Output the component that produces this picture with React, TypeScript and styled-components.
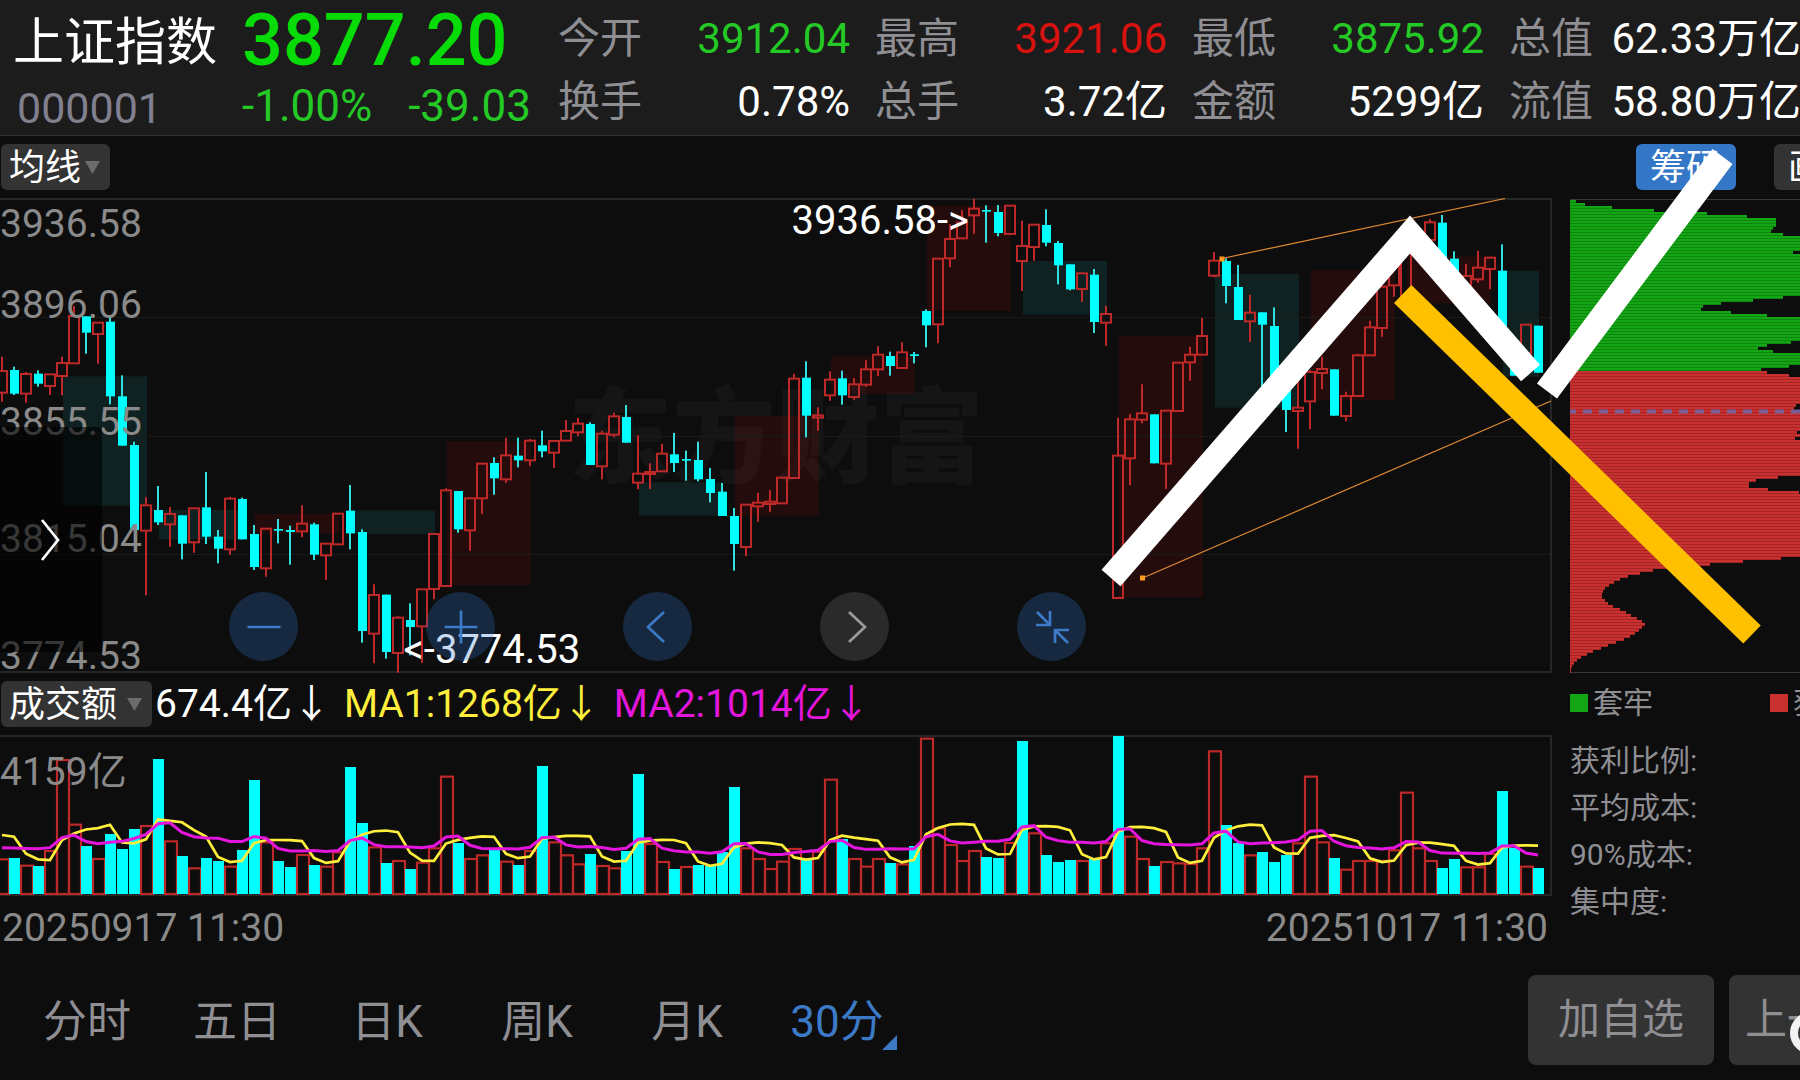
import React from "react";
import styled, { createGlobalStyle } from "styled-components";

/* ---------- market data ---------- */

type Side = "R" | "C";
type Candle = [Side, number, number, number, number];

// side, body top, body bottom, wick top, wick bottom (in thirds of a pixel below the price origin)
const candles: Candle[] = [
  ["R", 543, 608, 500, 635], ["C", 540, 611, 530, 615], ["R", 552, 611, 546, 638], ["C", 551, 581, 541, 590],
  ["R", 553, 588, 553, 615], ["R", 519, 558, 500, 616], ["R", 378, 520, 348, 520], ["C", 379, 428, 379, 491],
  ["R", 398, 432, 398, 521], ["C", 395, 619, 384, 643], ["C", 619, 767, 556, 767], ["C", 765, 1020, 755, 1020],
  ["R", 946, 1022, 922, 1216], ["C", 960, 997, 888, 1005], ["R", 972, 1003, 951, 1070], ["C", 976, 1061, 976, 1108],
  ["R", 955, 1057, 955, 1088], ["C", 952, 1040, 846, 1062], ["C", 1040, 1076, 1020, 1120], ["R", 926, 1078, 920, 1094],
  ["C", 927, 1048, 923, 1048], ["C", 1032, 1131, 1005, 1140], ["R", 1016, 1135, 1016, 1160], ["C", 1017, 1022, 987, 1060],
  ["C", 1020, 1026, 1007, 1124], ["R", 1001, 1024, 946, 1042], ["C", 1003, 1094, 998, 1110], ["R", 1061, 1096, 1061, 1170],
  ["R", 971, 1063, 971, 1063], ["C", 962, 1030, 885, 1078], ["C", 1026, 1323, 1018, 1358], ["R", 1215, 1331, 1183, 1420],
  ["C", 1214, 1386, 1214, 1406], ["R", 1283, 1389, 1279, 1448], ["C", 1290, 1311, 1240, 1396], ["R", 1198, 1309, 1198, 1418],
  ["R", 1032, 1197, 1032, 1228], ["R", 901, 1188, 895, 1188], ["C", 903, 1018, 903, 1028], ["R", 925, 1021, 925, 1082],
  ["R", 821, 925, 821, 972], ["C", 819, 865, 802, 914], ["R", 796, 868, 743, 878], ["C", 797, 811, 743, 832],
  ["R", 752, 811, 747, 828], ["C", 766, 784, 722, 802], ["R", 753, 788, 753, 834], ["R", 723, 752, 690, 752],
  ["R", 701, 727, 684, 738], ["C", 702, 825, 697, 825], ["R", 731, 829, 722, 868], ["R", 679, 734, 668, 742],
  ["C", 681, 758, 645, 758], ["R", 851, 878, 736, 898], ["R", 846, 852, 820, 897], ["R", 791, 844, 761, 844],
  ["C", 793, 819, 729, 846], ["C", 807, 812, 782, 872], ["C", 810, 868, 755, 874], ["C", 867, 909, 834, 937],
  ["C", 905, 978, 879, 978], ["C", 978, 1062, 954, 1142], ["R", 944, 1071, 944, 1099], ["R", 938, 949, 908, 995],
  ["R", 935, 942, 900, 965], ["R", 863, 940, 863, 940], ["R", 566, 864, 551, 864], ["C", 563, 677, 514, 742],
  ["R", 676, 683, 652, 722], ["R", 569, 616, 544, 632], ["C", 565, 616, 542, 644], ["R", 583, 621, 565, 629],
  ["R", 538, 584, 511, 590], ["R", 494, 538, 469, 558], ["C", 498, 528, 485, 557], ["R", 487, 534, 457, 534],
  ["C", 493, 498, 486, 520], ["C", 363, 406, 358, 472], ["R", 206, 403, 206, 460], ["R", 147, 205, 103, 232],
  ["R", 98, 145, 60, 145], ["R", 56, 76, 26, 131], ["C", 60, 64, 46, 158], ["C", 66, 129, 45, 139],
  ["R", 47, 132, 47, 132], ["R", 168, 213, 92, 303], ["R", 104, 171, 104, 212], ["C", 105, 158, 58, 169],
  ["C", 159, 226, 153, 283], ["C", 223, 298, 223, 301], ["R", 250, 297, 250, 336], ["C", 254, 396, 237, 429],
  ["R", 372, 398, 347, 467], ["R", 797, 1224, 683, 1224], ["R", 688, 805, 672, 886], ["R", 670, 689, 583, 700],
  ["C", 673, 820, 673, 820], ["R", 662, 821, 662, 897], ["R", 518, 663, 518, 663], ["R", 494, 517, 470, 572],
  ["R", 438, 494, 384, 496], ["R", 212, 257, 186, 262], ["C", 213, 288, 205, 340], ["C", 291, 390, 225, 390],
  ["R", 368, 394, 314, 456], ["C", 367, 404, 367, 590], ["C", 408, 560, 352, 560], ["C", 590, 660, 560, 726],
  ["R", 653, 663, 560, 776], ["R", 546, 634, 540, 718], ["R", 537, 549, 500, 598], ["C", 538, 677, 538, 677],
  ["R", 618, 678, 605, 694], ["R", 496, 618, 491, 618], ["R", 412, 496, 392, 496], ["R", 290, 414, 290, 440],
  ["R", 220, 286, 200, 320], ["R", 190, 330, 190, 330], ["R", 150, 190, 150, 190], ["R", 97, 150, 88, 160],
  ["C", 98, 230, 75, 230], ["C", 206, 260, 184, 270], ["R", 258, 285, 222, 290], ["R", 233, 268, 182, 278],
  ["R", 203, 237, 200, 298], ["C", 242, 440, 163, 440], ["C", 500, 557, 500, 557], ["R", 404, 490, 404, 490],
  ["C", 407, 548, 407, 548],
];

// side, left edge, top, bottom, width
const zones: [Side, number, number, number, number][] = [
  ["C", 63, 559, 947, 84], ["C", 159, 960, 1048, 84], ["R", 255, 972, 1030, 84], ["C", 351, 961, 1032, 84],
  ["R", 447, 753, 1185, 84], ["C", 639, 877, 977, 84], ["R", 735, 678, 977, 84], ["R", 831, 499, 611, 84],
  ["R", 927, 48, 362, 84], ["C", 1023, 213, 374, 84], ["R", 1119, 438, 1222, 84], ["C", 1215, 252, 653, 84],
  ["R", 1311, 241, 631, 84], ["R", 1407, 200, 340, 84], ["C", 1503, 242, 560, 36],
];

// turnover per bar, sign gives the colour: positive rises, negative falls
const turnover = [
  104, -108, 85, -84, 129, 402, 208, -144, 105, -180, -135, -195, 204, -405, 158, -114, 77, -108, -99, 82,
  -132, -342, 155, -99, -81, 117, -87, 82, 125, -381, -213, 140, -93, 99, -75, 94, 137, 352, -153, 105,
  116, -132, 97, -87, 129, -384, 155, 116, 89, -120, 84, 77, -129, -360, 150, 96, -75, 81, -87, -84,
  -126, -321, 137, 105, 75, 97, 135, -105, 127, 343, -165, 105, 82, 105, -93, 89, -144, 466, 197, 147,
  99, 129, -111, -108, 153, -459, 182, -117, -96, -102, 99, -105, 152, -474, 172, 105, -84, 96, 92, 90,
  137, 428, -207, -153, 116, -126, -96, -117, 152, 352, 155, -108, 73, 99, 99, 99, 131, 304, 137, 99,
  -78, -105, 80, 80, 120, -309, -138, 82, -78,
];
const earlier = [115, 100, 95, 95, 100, 133, 340, 169, 139];

const FULL = 249;
const chipRows: number[] = (() => {
  const rows = new Array(158).fill(FULL);
  const put = (start: number, widths: number[]) => widths.forEach((w, i) => (rows[start + i] = w));
  put(0, [6, 15, 42, 84, 137, 177, 206, 206, 206, 203, 201, 213]);
  put(17, [223]);
  put(32, [213, 183, 151, 133, 131, 161, 197]);
  put(47, [221, 197, 188, 203]);
  put(55, [219, 191, 197, 219]);
  put(68, [226, 224]);
  put(77, [227]);
  put(79, [225]);
  put(92, [208, 186, 179, 179, 198, 229]);
  put(119, [
    211, 173, 140, 104, 83, 70, 58, 50, 44, 39, 35, 33, 32, 32, 35, 38, 43, 50, 56, 61, 67, 72, 75, 72, 69, 65, 60,
    54, 46, 38, 31, 23, 17, 11, 7, 4, 2, 1, 1,
  ]);
  return rows;
})();

const quotes = [
  { label: "今开", value: "3912.04", tone: "down" },
  { label: "最高", value: "3921.06", tone: "up" },
  { label: "最低", value: "3875.92", tone: "down" },
  { label: "总值", value: "62.33万亿", tone: "flat" },
  { label: "换手", value: "0.78%", tone: "flat" },
  { label: "总手", value: "3.72亿", tone: "flat" },
  { label: "金额", value: "5299亿", tone: "flat" },
  { label: "流值", value: "58.80万亿", tone: "flat" },
] as const;

/* ---------- palette ---------- */

const c = {
  page: "#0d0d0d",
  header: "#1c1c1c",
  line: "#262626",
  grid: "#1a1a1a",
  button: "#333333",
  muted: "#8e8e93",
  axis: "#8a8a8a",
  blue: "#3377c6",
  cyan: "#00ffff",
  cyanWick: "#35dede",
  red: "#bd2828",
  yellow: "#ffef3c",
  magenta: "#e415dc",
};
const toneColor = { up: "#d8120f", down: "#25c925", flat: "#ffffff" };

/* ---------- styled parts ---------- */

const Global = createGlobalStyle`
  * { box-sizing: border-box; }
  body { margin: 0; background: ${c.page}; }
  button, select { font-family: inherit; margin: 0; border: 0; cursor: pointer; }
  svg { display: block; }
`;

const Page = styled.div`
  position: relative;
  min-height: 100vh;
  overflow: hidden;
  background: ${c.page};
  color: #fff;
  font-family: Roboto, "Noto Sans CJK SC", sans-serif;
`;

const Header = styled.header`
  display: grid;
  grid-template-columns: 229px 316px minmax(0, 1fr);
  padding: 12px 0 3px 13px;
  background: ${c.header};
  border-bottom: 1px solid #333;
`;
const Identity = styled.div`
  display: flex;
  flex-direction: column;
  gap: 10px;
`;
const Name = styled.h1`
  margin: 0;
  font-size: 51px;
  line-height: 62px;
  font-weight: 400;
`;
const Code = styled.span`
  padding-left: 4px;
  font-size: 43px;
  line-height: 48px;
  color: #80808e;
`;
const PriceBlock = styled.div`
  display: flex;
  flex-direction: column;
  gap: 14px;
`;
const Price = styled.strong`
  font-size: 72px;
  line-height: 58px;
  font-weight: 500;
  color: #08dc08;
`;
const Change = styled.div`
  display: flex;
  gap: 36px;
  font-size: 44px;
  line-height: 44px;
  color: ${toneColor.down};
`;
const Quotes = styled.dl`
  display: grid;
  grid-template-columns: repeat(4, minmax(292px, 1fr));
  gap: 9px 25px;
  margin: 0;
  align-content: start;
`;
const Quote = styled.div`
  display: flex;
  justify-content: space-between;
  font-size: 42px;
  line-height: 54px;
  white-space: nowrap;
`;
const QuoteLabel = styled.dt`
  color: ${c.muted};
`;
const QuoteValue = styled.dd<{ $tone: keyof typeof toneColor }>`
  margin: 0;
  color: ${(p) => toneColor[p.$tone]};
`;

const Workspace = styled.main`
  position: relative;
`;
const Toolbar = styled.div`
  display: flex;
  align-items: center;
  justify-content: space-between;
  height: 62px;
  padding-left: 1px;
`;
const Picker = styled.label<{ $width: number }>`
  display: inline-grid;
  flex: none;
  width: ${(p) => p.$width}px;
  align-items: center;
  svg { grid-area: 1 / 1; justify-self: end; margin-right: 10px; pointer-events: none; }
`;
const PickerSelect = styled.select`
  grid-area: 1 / 1;
  width: 100%;
  height: 46px;
  padding: 1px 0 0 8px;
  appearance: none;
  border-radius: 6px;
  background: ${c.button};
  color: #fff;
  font-size: 36px;
`;
const Tools = styled.div`
  display: flex;
  flex: 0 0 164px;
  gap: 38px;
  overflow: hidden;
`;
const ToolButton = styled.button<{ $active?: boolean }>`
  flex: none;
  width: 100px;
  height: 46px;
  padding: 0;
  border-radius: 6px;
  background: ${(p) => (p.$active ? c.blue : c.button)};
  color: #fff;
  font-size: 36px;
  line-height: 48px;
`;

const Columns = styled.div`
  display: grid;
  grid-template-columns: minmax(0, 1fr) 248px;
`;
const ChartColumn = styled.section`
  min-width: 0;
`;
const PricePane = styled.div`
  position: relative;
  isolation: isolate;
`;
const Watermark = styled.div`
  position: absolute;
  inset: 0;
  z-index: -1;
  display: grid;
  place-items: center;
  padding-top: 8px;
  font-size: 104px;
  line-height: 104px;
  font-weight: 900;
  color: #151515;
`;
const Canvas = styled.svg<{ $height: number }>`
  width: 100%;
  height: ${(p) => p.$height}px;
`;
const Axis = styled.div`
  position: absolute;
  inset: 4px auto 3px 0;
  display: grid;
  grid-template-rows: repeat(4, 1fr);
  font-size: 39px;
  line-height: 28px;
  color: ${c.axis};
`;
const AxisBand = styled.div`
  display: flex;
  flex-direction: column;
  justify-content: flex-end;
  &:first-child { justify-content: space-between; padding-top: 8px; }
`;
const Marker = styled.span<{ $left: string; $edge: "top" | "bottom" }>`
  position: absolute;
  left: ${(p) => p.$left};
  ${(p) => p.$edge}: 9px;
  font-size: 40px;
  line-height: 28px;
  white-space: nowrap;
`;
const Drawer = styled.button`
  position: absolute;
  left: 0;
  top: 229px;
  width: 102px;
  height: 225px;
  padding: 0 0 0 40px;
  background: rgba(0, 0, 0, 0.6);
`;
const Controls = styled.div`
  position: absolute;
  left: 229px;
  bottom: 12px;
  display: flex;
  gap: 128px;
`;
const RoundButton = styled.button<{ $idle?: boolean }>`
  display: grid;
  place-items: center;
  width: 69px;
  height: 69px;
  padding: 0;
  border-radius: 50%;
  background: ${(p) => (p.$idle ? "rgba(120,120,120,.28)" : "rgba(48,118,208,.27)")};
  color: ${(p) => (p.$idle ? "#9a9a9a" : "#3c79c6")};
`;
const TurnoverBar = styled.div`
  display: flex;
  align-items: center;
  height: 62px;
  padding-left: 1px;
`;
const Readings = styled.div`
  display: flex;
  gap: 13px;
  padding-left: 3px;
  font-size: 39px;
  line-height: 46px;
  white-space: nowrap;
`;
const Reading = styled.span<{ $color: string }>`
  color: ${(p) => p.$color};
`;
const TurnoverPane = styled.div`
  position: relative;
`;
const TurnoverMax = styled.span`
  position: absolute;
  left: 0;
  top: 23px;
  font-size: 39px;
  line-height: 28px;
  color: ${c.axis};
`;
const Dates = styled.div`
  display: flex;
  justify-content: space-between;
  padding: 0 4px 0 2px;
  font-size: 39px;
  line-height: 64px;
  color: ${c.axis};
`;

const ChipColumn = styled.aside`
  padding-left: 18px;
  overflow: hidden;
  color: ${c.muted};
  font-size: 30px;
  white-space: nowrap;
`;
const ChipLegend = styled.div`
  display: grid;
  grid-template-columns: 200px 200px;
  margin-bottom: 4px;
  line-height: 60px;
`;
const ChipKey = styled.span<{ $color: string }>`
  display: flex;
  align-items: center;
  gap: 5px;
  &::before {
    content: "";
    width: 18px;
    height: 18px;
    background: ${(p) => p.$color};
  }
`;
const ChipFacts = styled.dl`
  margin: 0;
  line-height: 47px;
  dt { margin: 0; }
`;

const Footer = styled.nav`
  display: flex;
  align-items: center;
  justify-content: space-between;
  height: 120px;
  padding-left: 12px;
`;
const Tabs = styled.div`
  display: flex;
  margin-top: 4px;
`;
const Tab = styled.button<{ $active?: boolean }>`
  position: relative;
  width: 150px;
  height: 60px;
  padding: 0;
  background: none;
  font-size: 44px;
  line-height: 60px;
  color: ${(p) => (p.$active ? "#3c79c6" : c.muted)};
  svg { position: absolute; right: 15px; bottom: 2px; }
`;
const Actions = styled.div`
  display: flex;
  flex: 0 0 272px;
  gap: 15px;
  overflow: hidden;
`;
const ActionButton = styled.button`
  flex: none;
  min-width: 186px;
  height: 90px;
  padding: 0 16px;
  border-radius: 8px;
  background: ${c.button};
  color: ${c.muted};
  font-size: 42px;
  line-height: 90px;
`;
const Overlay = styled.svg`
  position: absolute;
  left: 0;
  top: 0;
  width: 100%;
  height: 537px;
  pointer-events: none;
`;
const FloatingRing = styled.svg`
  position: absolute;
  right: 0;
  bottom: 24px;
`;

/* ---------- drawings ---------- */

const STEP = 12;
const xAt = (i: number) => 2 + STEP * i;
const py = (v: number) => v / 3 + 190;

const Arrow = () => (
  <svg width="15" height="13" viewBox="0 0 15 13" aria-hidden="true">
    <path d="M0 0h15l-7.500 13z" fill="#6b6b6b" />
  </svg>
);

function PriceChart() {
  return (
    <Canvas $height={475} viewBox="0 198 1552 475" preserveAspectRatio="none">
      {zones.map(([side, x, top, bottom, w], i) => (
        <rect key={i} x={x} y={py(top)} width={w} height={(bottom - top) / 3}
          fill={side === "C" ? "rgba(25,130,122,.19)" : "rgba(170,12,12,.16)"} />
      ))}
      <g stroke={c.grid} strokeWidth="1">
        <path d="M0 317.500H1551M0 436.500H1551M0 554.500H1551" />
      </g>
      <path d="M0 199H1551V672H0" fill="none" stroke={c.line} strokeWidth="2" />
      {candles.map(([side, top, bottom, high, low], i) => {
        const x = xAt(i);
        if (side === "C") {
          return (
            <g key={i}>
              <rect x={x - 1} y={py(high)} width="2" height={(low - high) / 3} fill={c.cyanWick} />
              <rect x={x - 4} y={py(top)} width="9" height={Math.max(1.6, (bottom - top) / 3)} fill={c.cyan} />
            </g>
          );
        }
        return (
          <g key={i} fill="none" stroke={c.red} strokeWidth="2">
            <path d={`M${x} ${py(high)}V${py(top)}M${x} ${py(bottom)}V${py(low)}`} />
            <rect x={x - 5} y={py(top)} width="10" height={Math.max(1, (bottom - top) / 3)} />
          </g>
        );
      })}
      <g stroke="#e08a33" strokeWidth="1.200">
        <path d="M1222 258.500L1505 198.500M1142.700 578L1551 401" />
      </g>
      <rect x="1219.500" y="256.500" width="5" height="5" fill="#ff9d1f" />
      <rect x="1140" y="575.500" width="5" height="5" fill="#ff9d1f" />
    </Canvas>
  );
}

function movingAverage(period: number) {
  const all = [...earlier, ...turnover.map(Math.abs)];
  return turnover
    .map((_, i) => {
      const end = i + earlier.length + 1;
      const mean = all.slice(end - period, end).reduce((a, b) => a + b, 0) / period;
      return `${xAt(i)},${894 - mean / 3}`;
    })
    .join(" ");
}

function TurnoverChart() {
  return (
    <Canvas $height={161} viewBox="0 735 1552 161" preserveAspectRatio="none">
      <path d="M0 736H1551V895H0" fill="none" stroke={c.line} strokeWidth="2" />
      {turnover.map((v, i) =>
        v > 0 ? (
          <rect key={i} x={xAt(i) - 5} y={894 - v / 3} width="12" height={v / 3} fill="none" stroke={c.red} strokeWidth="2.200" />
        ) : (
          <rect key={i} x={xAt(i) - 5} y={894 + v / 3} width="11" height={-v / 3} fill={c.cyan} />
        )
      )}
      <polyline points={movingAverage(5)} fill="none" stroke={c.yellow} strokeWidth="2.700" />
      <polyline points={movingAverage(10)} fill="none" stroke={c.magenta} strokeWidth="3" />
    </Canvas>
  );
}

function ChipChart() {
  return (
    <svg width="249" height="475" viewBox="0 198 249 475">
      <path d="M0 199.500H249M0 672.500H249" stroke="#383838" strokeWidth="1" />
      {chipRows.map((w, i) => {
        const y = 200 + i * 3;
        const green = i < 57;
        return (
          <g key={i}>
            <rect x="0" y={y} width={w} height="3" fill={green ? "#14a514" : "#c93131"} />
            <rect x="0" y={y + 2} width={w} height="1" fill={green ? "#0e8510" : "#a32526"} />
          </g>
        );
      })}
      <path d="M0 411.500H249" stroke="#7a5f96" strokeWidth="4" strokeDasharray="9 7" strokeDashoffset="3" />
    </svg>
  );
}

const stroke = { fill: "none", stroke: "currentColor", strokeWidth: 2.7 };

const controls = [
  { name: "缩小", path: "M-16.500 0H16.500" },
  { name: "放大", path: "M-16.500 0H16.500M0-16.500V16.500" },
  { name: "向左", path: "M6-15L-10 0L6 15" },
  { name: "向右", path: "M-6-15L10 0L-6 15", idle: true },
  { name: "收起", path: "M-15-15L-2-2M-2-16V-2H-16M16 16L3 3M3 16V3H17" },
];

export default function App() {
  return (
    <Page>
      <Global />
      <Header>
        <Identity>
          <Name>上证指数</Name>
          <Code>000001</Code>
        </Identity>
        <PriceBlock>
          <Price>3877.20</Price>
          <Change>
            <span>-1.00%</span>
            <span>-39.03</span>
          </Change>
        </PriceBlock>
        <Quotes>
          {quotes.map((q) => (
            <Quote key={q.label}>
              <QuoteLabel>{q.label}</QuoteLabel>
              <QuoteValue $tone={q.tone}>{q.value}</QuoteValue>
            </Quote>
          ))}
        </Quotes>
      </Header>

      <Workspace>
        <Toolbar>
          <Picker $width={109}>
            <PickerSelect aria-label="主图指标" defaultValue="均线">
              <option>均线</option>
            </PickerSelect>
            <Arrow />
          </Picker>
          <Tools>
            <ToolButton $active>筹码</ToolButton>
            <ToolButton>画线</ToolButton>
          </Tools>
        </Toolbar>

        <Columns>
          <ChartColumn>
            <PricePane>
              <Watermark>东方财富</Watermark>
              <PriceChart />
              <Axis>
                <AxisBand>
                  <span>3936.58</span>
                  <span>3896.06</span>
                </AxisBand>
                <AxisBand>3855.55</AxisBand>
                <AxisBand>3815.04</AxisBand>
                <AxisBand>3774.53</AxisBand>
              </Axis>
              <Marker $left="51%" $edge="top">3936.58-&gt;</Marker>
              <Marker $left="26%" $edge="bottom">&lt;-3774.53</Marker>
              <Drawer aria-label="展开">
                <svg width="20" height="42" viewBox="0 0 20 42">
                  <path d="M2 1L18 21L2 41" fill="none" stroke="#fff" strokeWidth="2.700" />
                </svg>
              </Drawer>
              <Controls>
                {controls.map((b) => (
                  <RoundButton key={b.name} aria-label={b.name} $idle={b.idle}>
                    <svg width="40" height="40" viewBox="-20 -20 40 40">
                      <path d={b.path} {...stroke} />
                    </svg>
                  </RoundButton>
                ))}
              </Controls>
            </PricePane>

            <TurnoverBar>
              <Picker $width={151}>
                <PickerSelect aria-label="副图指标" defaultValue="成交额">
                  <option>成交额</option>
                </PickerSelect>
                <Arrow />
              </Picker>
              <Readings>
                <Reading $color="#fff">674.4亿↓</Reading>
                <Reading $color={c.yellow}>MA1:1268亿↓</Reading>
                <Reading $color={c.magenta}>MA2:1014亿↓</Reading>
              </Readings>
            </TurnoverBar>
            <TurnoverPane>
              <TurnoverChart />
              <TurnoverMax>4159亿</TurnoverMax>
            </TurnoverPane>
            <Dates>
              <time>20250917 11:30</time>
              <time>20251017 11:30</time>
            </Dates>
          </ChartColumn>

          <ChipColumn>
            <ChipChart />
            <ChipLegend>
              <ChipKey $color="#14a514">套牢</ChipKey>
              <ChipKey $color="#c93131">获利</ChipKey>
            </ChipLegend>
            <ChipFacts>
              <dt>获利比例:</dt>
              <dt>平均成本:</dt>
              <dt>90%成本:</dt>
              <dt>集中度:</dt>
            </ChipFacts>
          </ChipColumn>
        </Columns>

        <Overlay viewBox="0 136 1800 537" preserveAspectRatio="none" aria-hidden="true">
          <g fill="none" strokeWidth="25">
            <path d="M1402.700 294L1752 634.500" stroke="#ffc000" />
            <path d="M1111 578L1410 234.500L1530.500 373M1547 391L1722.500 156.500" stroke="#fff" />
          </g>
        </Overlay>
      </Workspace>

      <Footer>
        <Tabs>
          <Tab>分时</Tab>
          <Tab>五日</Tab>
          <Tab>日K</Tab>
          <Tab>周K</Tab>
          <Tab>月K</Tab>
          <Tab $active>
            30分
            <svg width="15" height="15" viewBox="0 0 15 15" aria-hidden="true">
              <path d="M15 0V15H0z" fill="#3c79c6" />
            </svg>
          </Tab>
        </Tabs>
        <Actions>
          <ActionButton>加自选</ActionButton>
          <ActionButton>上一周期</ActionButton>
        </Actions>
      </Footer>
      <FloatingRing width="10" height="46" viewBox="0 0 10 46" aria-hidden="true">
        <circle cx="21" cy="23" r="17" fill="none" stroke="#f2f2f2" strokeWidth="8" />
      </FloatingRing>
    </Page>
  );
}
